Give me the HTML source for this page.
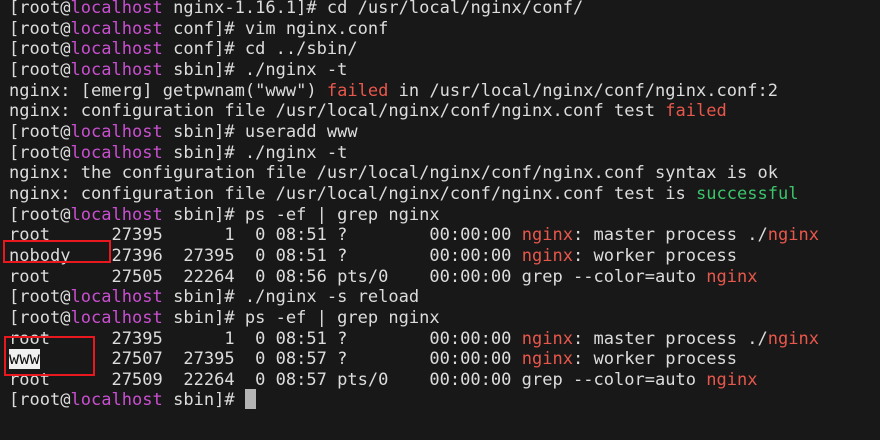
<!DOCTYPE html>
<html><head><style>
html,body{margin:0;padding:0;background:#181818;width:880px;height:440px;overflow:hidden}
pre{position:absolute;left:9px;top:-2px;margin:0;font-family:"DejaVu Sans Mono","Liberation Mono",monospace;font-size:17.05px;line-height:20.65px;color:#dcdcdc}
.m{color:#c94fd0}.r{color:#e8574b}.g{color:#3cc46a}
.hl{background:#f0f0f0;color:#111}
.box{position:absolute;border:2px solid #e8181e}
.cur{position:absolute;left:245px;top:389px;width:11px;height:20px;background:#b4b4b4}
</style></head><body>
<pre>[root@<span class="m">localhost</span> nginx-1.16.1]# cd /usr/local/nginx/conf/
[root@<span class="m">localhost</span> conf]# vim nginx.conf
[root@<span class="m">localhost</span> conf]# cd ../sbin/
[root@<span class="m">localhost</span> sbin]# ./nginx -t
nginx: [emerg] getpwnam("www") <span class="r">failed</span> in /usr/local/nginx/conf/nginx.conf:2
nginx: configuration file /usr/local/nginx/conf/nginx.conf test <span class="r">failed</span>
[root@<span class="m">localhost</span> sbin]# useradd www
[root@<span class="m">localhost</span> sbin]# ./nginx -t
nginx: the configuration file /usr/local/nginx/conf/nginx.conf syntax is ok
nginx: configuration file /usr/local/nginx/conf/nginx.conf test is <span class="g">successful</span>
[root@<span class="m">localhost</span> sbin]# ps -ef | grep nginx
root      27395      1  0 08:51 ?        00:00:00 <span class="r">nginx</span>: master process ./<span class="r">nginx</span>
nobody    27396  27395  0 08:51 ?        00:00:00 <span class="r">nginx</span>: worker process
root      27505  22264  0 08:56 pts/0    00:00:00 grep --color=auto <span class="r">nginx</span>
[root@<span class="m">localhost</span> sbin]# ./nginx -s reload
[root@<span class="m">localhost</span> sbin]# ps -ef | grep nginx
root      27395      1  0 08:51 ?        00:00:00 <span class="r">nginx</span>: master process ./<span class="r">nginx</span>
<span class="hl">www</span>       27507  27395  0 08:57 ?        00:00:00 <span class="r">nginx</span>: worker process
root      27509  22264  0 08:57 pts/0    00:00:00 grep --color=auto <span class="r">nginx</span>
[root@<span class="m">localhost</span> sbin]# </pre>
<div class="cur"></div>
<div class="box" style="left:3px;top:240px;width:104px;height:19px"></div>
<div class="box" style="left:4px;top:336px;width:87px;height:36px"></div>
</body></html>
